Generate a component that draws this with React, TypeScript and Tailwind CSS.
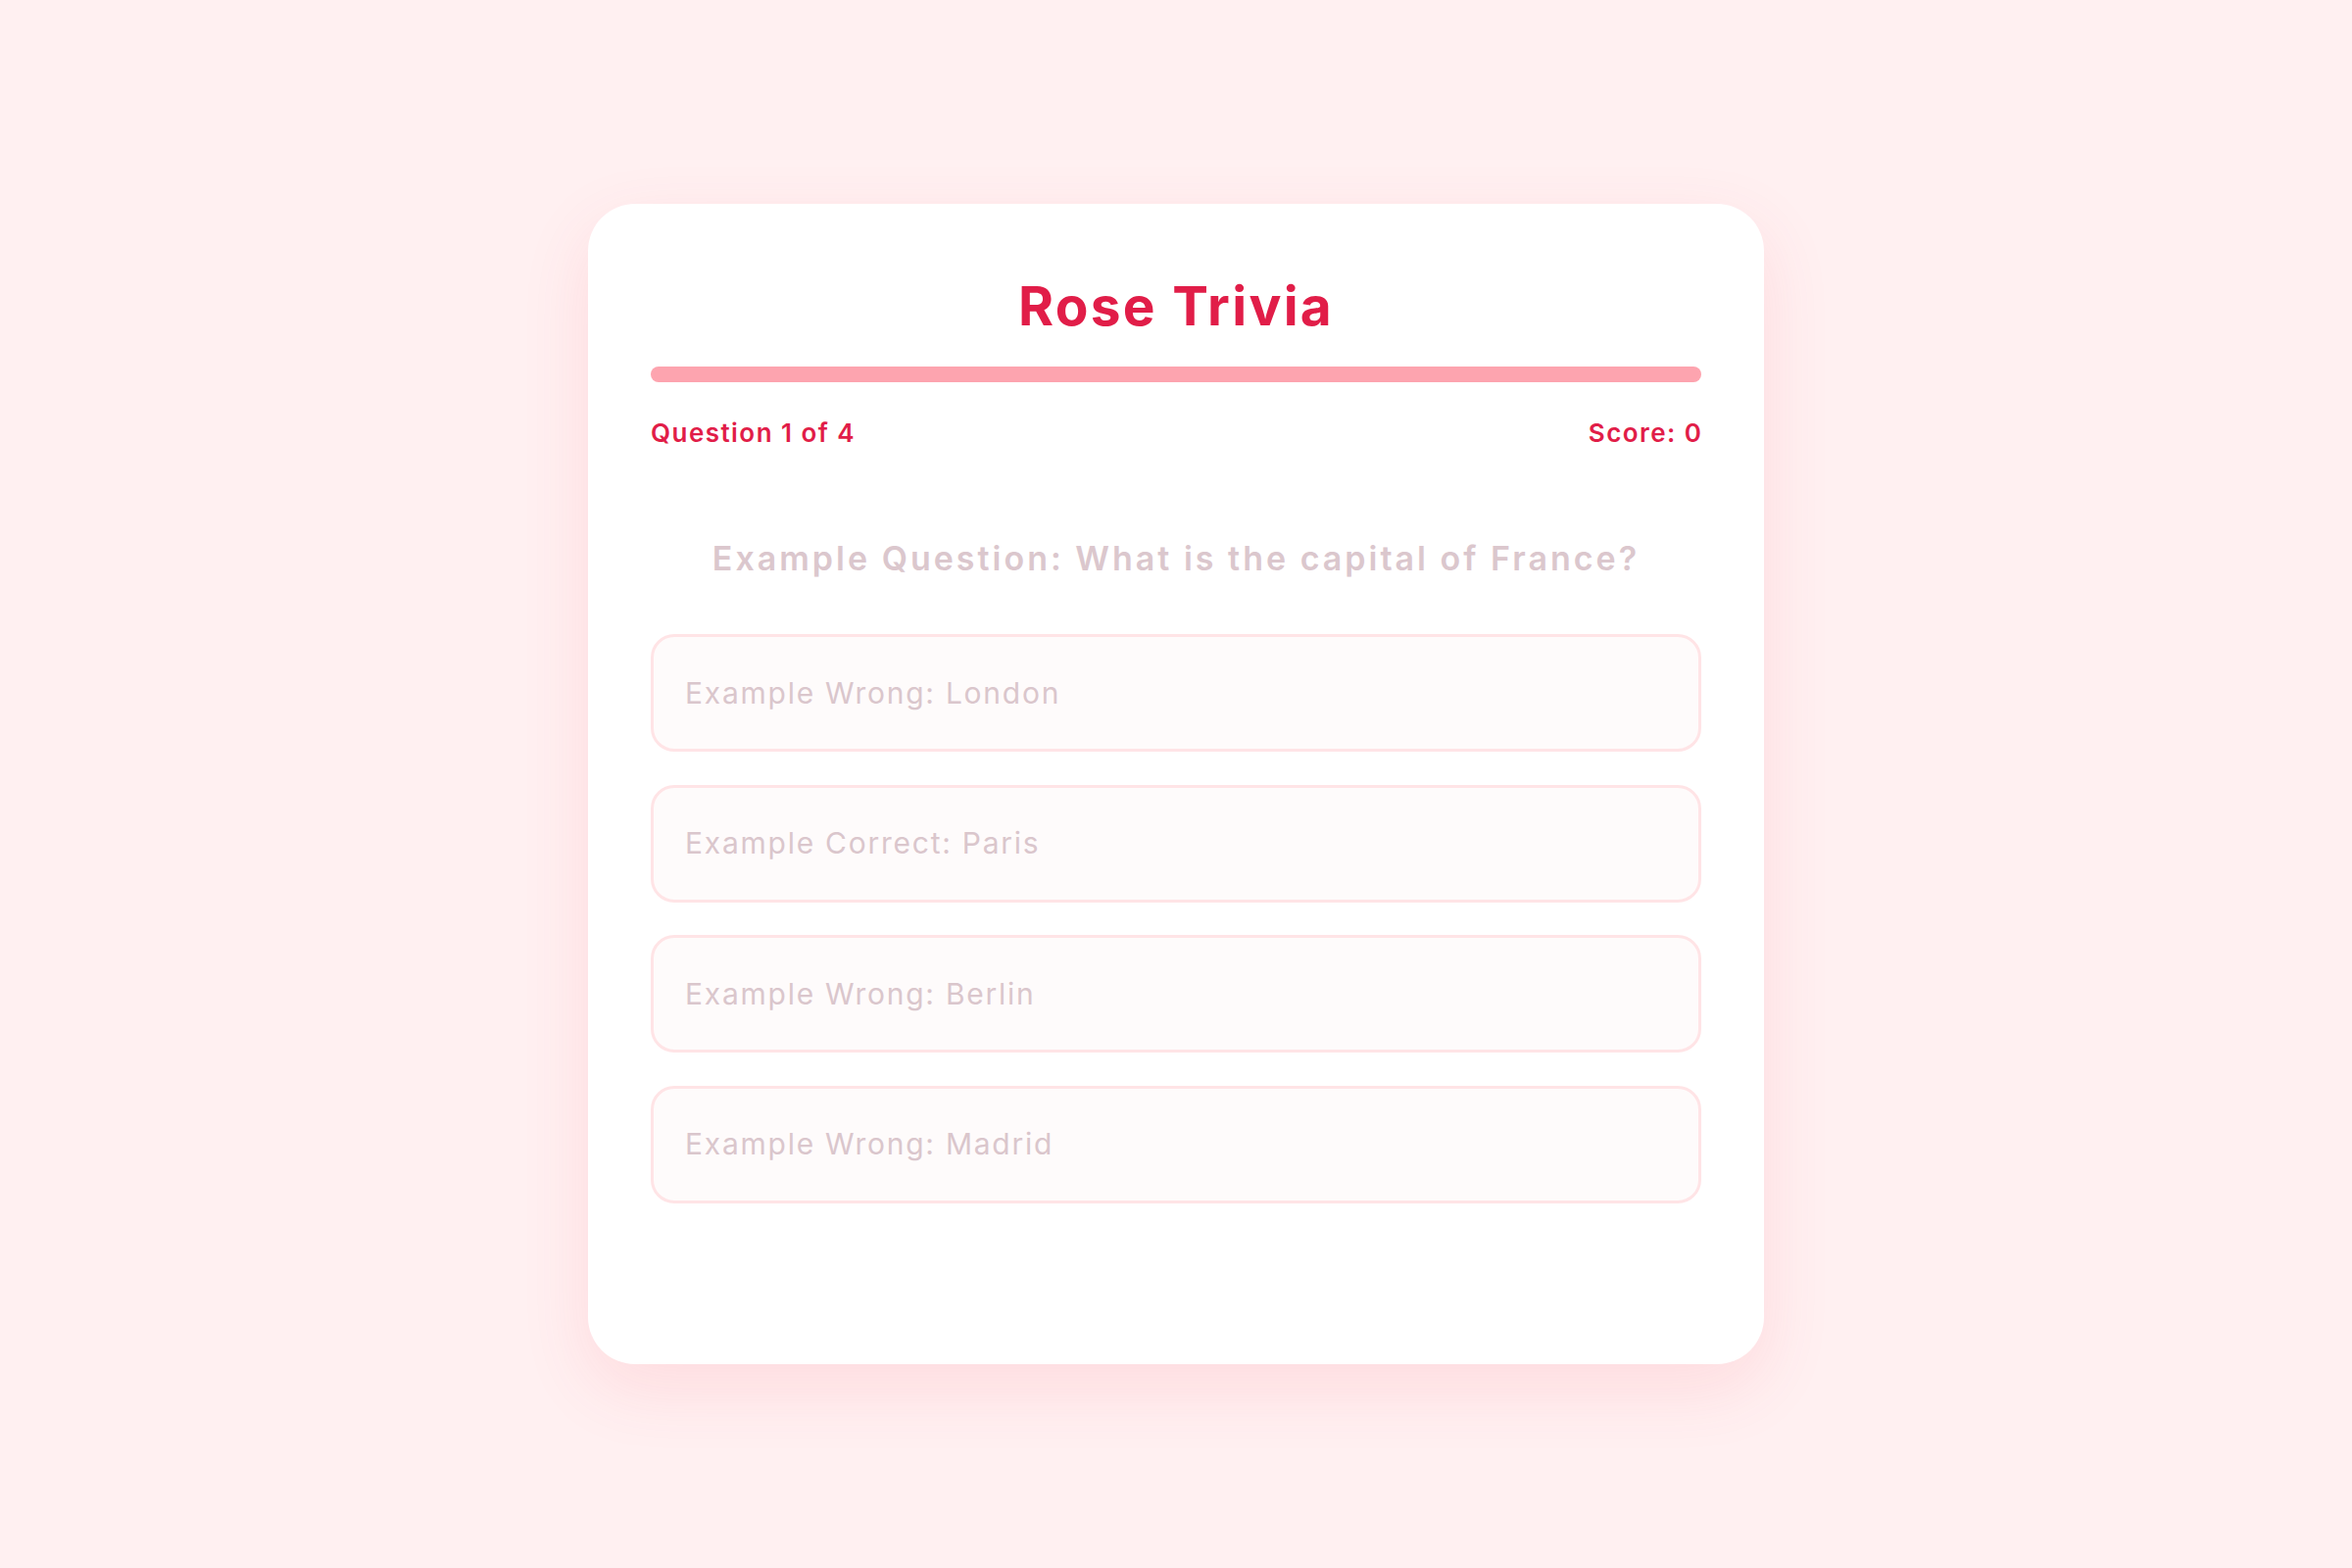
import React from "react";

const options = [
  "Example Wrong: London",
  "Example Correct: Paris",
  "Example Wrong: Berlin",
  "Example Wrong: Madrid",
];

export default function App() {
  return (
    <div className="min-h-screen w-full bg-[#fff0f1] flex items-center justify-center font-['Inter',sans-serif]">
      <div className="w-[1200px] h-[1184px] bg-white rounded-[48px] shadow-[0_24px_70px_rgba(244,63,94,0.12)] px-16 pt-16 flex flex-col">
        <h1 className="mt-[7px] text-center text-[55px] leading-[66px] font-bold text-[#e11d48] tracking-[2.3px]">
          Rose Trivia
        </h1>
        <div className="mt-[29px] h-4 w-full rounded-full bg-[#fda4af]" />
        <div className="mt-[36px] flex justify-between text-[26px] leading-[32px] font-semibold text-[#e11d48] tracking-[1.45px]">
          <span>Question 1 of 4</span>
          <span className="-mr-[1.45px]">Score: 0</span>
        </div>
        <h2 className="mt-[92px] text-center text-[34px] leading-[40px] font-semibold text-[#dbc7cd] tracking-[3px]">
          Example Question: What is the capital of France?
        </h2>
        <div className="mt-[57px] flex flex-col gap-[33.6px]">
          {options.map((o) => (
            <div
              key={o}
              className="h-[120px] flex items-center rounded-[24px] border-[3px] border-[#ffe4e6] bg-[#fefbfb] pl-[32px] text-[30px] text-[#dac6cc] tracking-[1.75px]"
            >
              {o}
            </div>
          ))}
        </div>
      </div>
    </div>
  );
}
